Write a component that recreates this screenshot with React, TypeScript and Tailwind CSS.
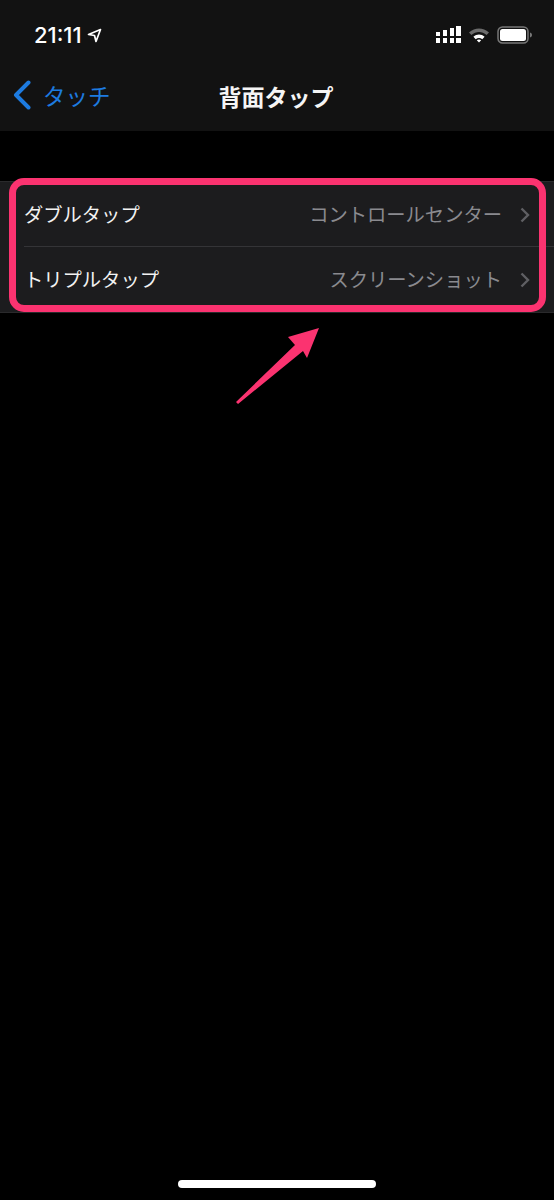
const jp = { fontFamily: '"Noto Sans CJK JP", "Noto Sans", sans-serif' };

function StatusIcons() {
  return (
    <div className="flex items-center gap-[7px]">
      <svg width="25" height="18" viewBox="0 0 25 18" fill="#fff">
        <rect x="0" y="6" width="4" height="4" />
        <rect x="0" y="12" width="4" height="5" />
        <rect x="7" y="4" width="4" height="6" />
        <rect x="7" y="12" width="4" height="5" />
        <rect x="14" y="2" width="4" height="8" />
        <rect x="14" y="12" width="4" height="5" />
        <rect x="20" y="0" width="5" height="10" />
        <rect x="20" y="12" width="5" height="5" />
      </svg>
      <svg width="22" height="16" viewBox="0 0 22 16">
        <path d="M1 5.5C7 0 15 0 21 5.5L18.6 8C14 4 8 4 3.4 8Z" fill="#6b6b6b" />
        <path d="M5.4 9.8C8.8 6.8 13.2 6.8 16.6 9.8L14.3 12.2C12.3 10.5 9.7 10.5 7.7 12.2Z" fill="#fff" />
        <path d="M8.8 13.2C10 12.2 12 12.2 13.2 13.2L11 15.6Z" fill="#fff" />
      </svg>
      <svg width="36" height="18" viewBox="0 0 36 18">
        <rect x="1" y="1" width="30" height="16" rx="4.5" fill="none" stroke="#777" strokeWidth="1.5" />
        <rect x="3" y="3" width="26" height="12" rx="2.5" fill="#fff" />
        <path d="M33 6.5C34.5 7 35 8 35 9s-.5 2-2 2.5Z" fill="#777" />
      </svg>
    </div>
  );
}

function Row({ label, value, divider }: { label: string; value: string; divider?: boolean }) {
  return (
    <div className="relative flex h-[65px] items-center justify-between pl-[24px] pr-[24px]">
      <span className="text-[19.3px] text-[#f2f2f2]">{label}</span>
      <div className="flex items-center gap-[18px]">
        <span className="text-[19.3px] text-[#8a8a8f]">{value}</span>
        <svg width="10" height="16" viewBox="0 0 10 16" fill="none" stroke="#5f5f63" strokeWidth="2.4">
          <path d="M1.5 1.5L8 8L1.5 14.5" />
        </svg>
      </div>
      {divider && <div className="absolute bottom-0 left-[24px] right-0 h-px bg-[#343437]" />}
    </div>
  );
}

export default function App() {
  return (
    <div className="flex min-h-[1200px] flex-col bg-black" style={jp}>
      <header className="h-[131px] bg-[#121212]">
        <div className="flex items-center justify-between pl-[34px] pr-[21px] pt-[22px]">
          <div className="flex items-center gap-[5px]">
            <span className="text-[22px] leading-[26px] font-medium text-white" style={{ fontFamily: 'Inter, sans-serif' }}>
              21:11
            </span>
            <svg width="15" height="15" viewBox="0 0 15 15" fill="none" stroke="#fff" strokeWidth="1.7" strokeLinejoin="round">
              <path d="M13.5 1.5L1.5 6.5L7.5 7.5L9 13.5Z" />
            </svg>
          </div>
          <StatusIcons />
        </div>
        <div className="relative mt-[26px] flex h-[44px] items-center justify-center">
          <div className="absolute left-[13px] top-[6px] flex items-center gap-[12px]">
            <svg width="18" height="30" viewBox="0 0 18 30" fill="none" stroke="#1d7be0" strokeWidth="4" strokeLinecap="round" strokeLinejoin="round">
              <path d="M15.5 2.5L3 15L15.5 27.5" />
            </svg>
            <span className="text-[22.5px] leading-[30px] text-[#1d7be0]">タッチ</span>
          </div>
          <h1 className="-ml-[2px] text-[23px] font-bold text-[#f5f5f5]">背面タップ</h1>
        </div>
      </header>

      <div className="relative mt-[50px] border-y border-[#2a2a2c] bg-[#1c1c1e]">
        <Row label="ダブルタップ" value="コントロールセンター" divider />
        <Row label="トリプルタップ" value="スクリーンショット" />
        <div className="absolute -top-[4px] bottom-0 left-[9px] right-[8px] rounded-[15px] border-[7px] border-[#fb3370]" />
        <svg className="absolute left-[232px] top-[142px]" width="92" height="84" viewBox="0 0 92 84" fill="#fb3370">
          <path d="M87 4L56 13L63 21L4 78L6 80L71 27L75 34Z" />
        </svg>
      </div>

      <div className="mt-auto flex justify-center pb-[12px]">
        <div className="h-[8px] w-[198px] rounded-full bg-white" />
      </div>
    </div>
  );
}
